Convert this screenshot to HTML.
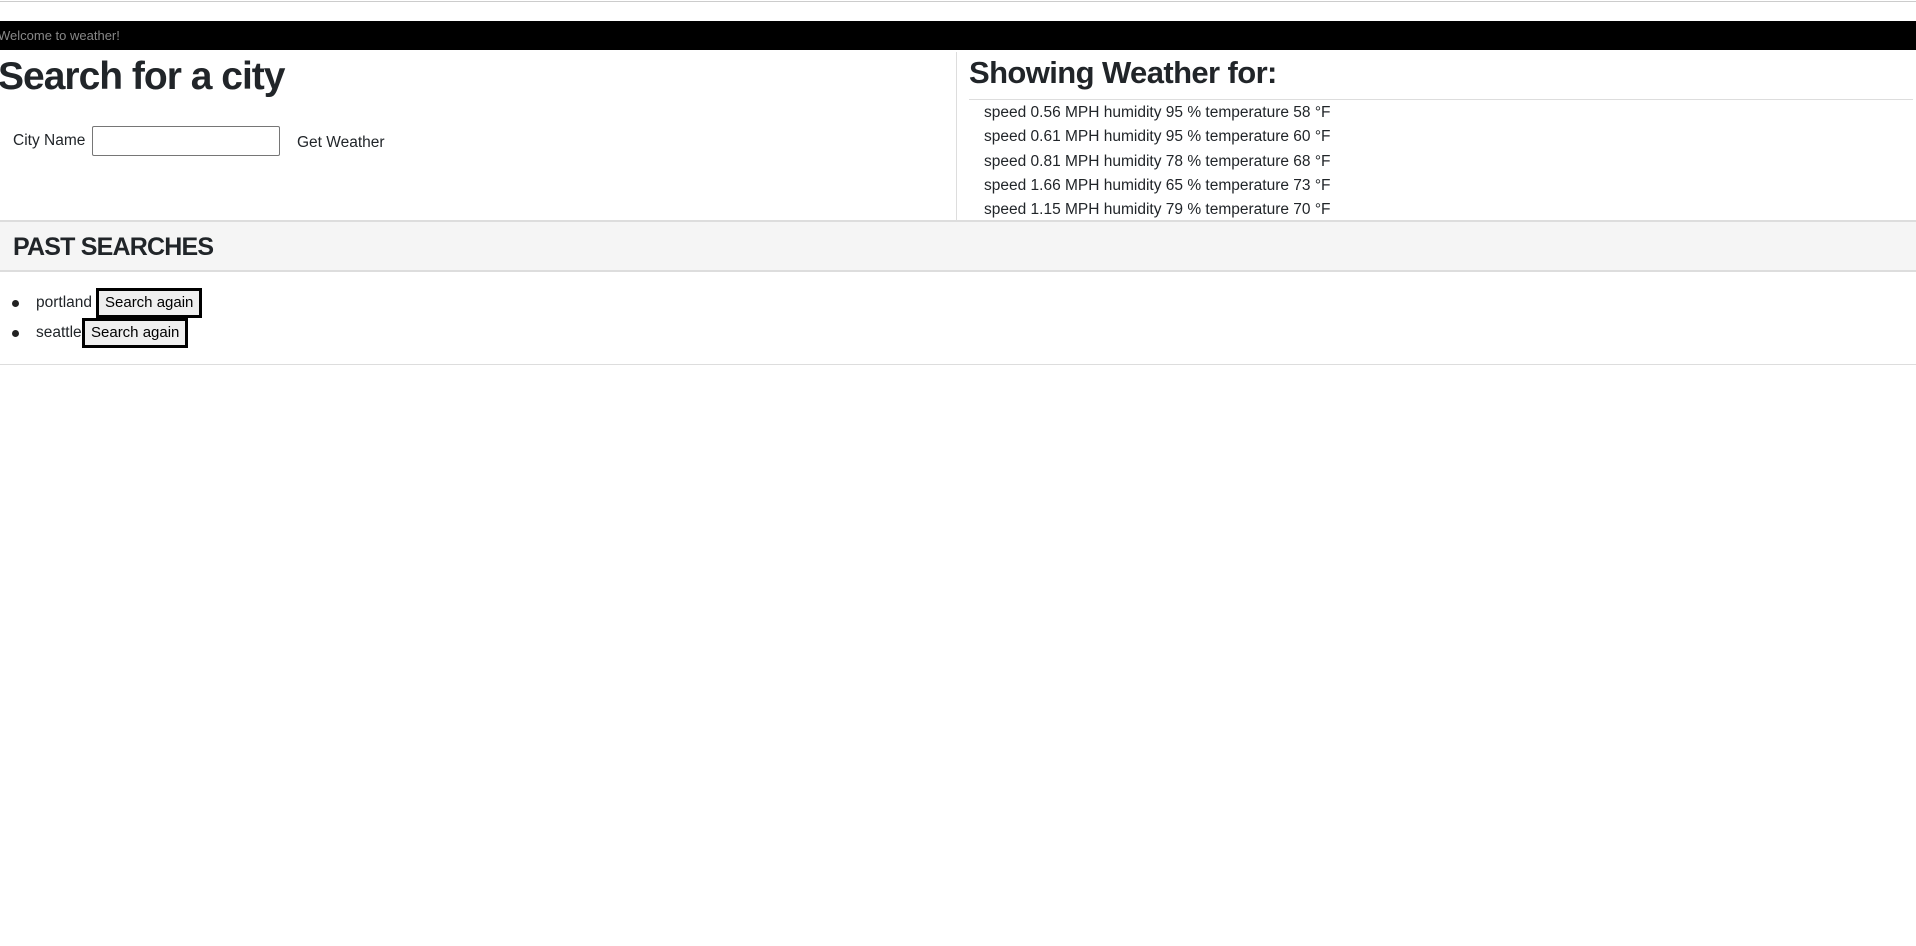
<!DOCTYPE html>
<html><head><meta charset="utf-8"><style>
*{box-sizing:border-box;margin:0;padding:0}
body{width:1916px;height:946px;background:#fff;font-family:"Liberation Sans",sans-serif;color:#212529;position:relative;overflow:hidden;font-size:16px}
.a{position:absolute;white-space:nowrap}
.btn{position:absolute;border:3px solid #000;background:#efefef;color:#000;font-size:15px;height:30px;line-height:24px;padding:0 6px}
</style></head><body>
<div class="a" style="left:0;top:1px;width:1916px;height:1px;background:#ccc"></div>
<div class="a" style="left:0;top:21px;width:1916px;height:29px;background:#000"></div>
<div class="a" style="left:-2px;top:28px;font-size:13px;color:#888">Welcome to weather!</div>
<div class="a" style="left:-2px;top:55px;font-size:39px;font-weight:bold;letter-spacing:-1px">Search for a city</div>
<div class="a" style="left:13px;top:132px;font-size:15.5px">City Name</div>
<div class="a" style="left:92px;top:126px;width:188px;height:30px;border:1px solid #767676;border-radius:2px"></div>
<div class="a" style="left:297px;top:134px;font-size:15.5px">Get Weather</div>
<div class="a" style="left:956px;top:52px;width:1px;height:168px;background:#ddd"></div>
<div class="a" style="left:969px;top:55px;font-size:31px;font-weight:bold;letter-spacing:-0.6px">Showing Weather for:</div>
<div class="a" style="left:969px;top:99px;width:944px;height:1px;background:#ddd"></div>
<div class="a" style="left:984px;top:101px;line-height:24.3px;font-size:15.5px">speed 0.56 MPH humidity 95 % temperature 58 °F<br>speed 0.61 MPH humidity 95 % temperature 60 °F<br>speed 0.81 MPH humidity 78 % temperature 68 °F<br>speed 1.66 MPH humidity 65 % temperature 73 °F<br>speed 1.15 MPH humidity 79 % temperature 70 °F</div>
<div class="a" style="left:0;top:220px;width:1916px;height:52px;background:#f5f5f5;border-top:2px solid #ddd;border-bottom:2px solid #ddd"></div>
<div class="a" style="left:13px;top:233px;font-size:25px;font-weight:bold;letter-spacing:-0.8px">PAST SEARCHES</div>
<div class="a" style="left:12px;top:300px;width:7px;height:7px;border-radius:50%;background:#222"></div>
<div class="a" style="left:36px;top:294px;font-size:15.5px">portland</div>
<div class="btn" style="left:96px;top:288px">Search again</div>
<div class="a" style="left:12px;top:330px;width:7px;height:7px;border-radius:50%;background:#222"></div>
<div class="a" style="left:36px;top:324px;font-size:15.5px">seattle</div>
<div class="btn" style="left:82px;top:318px">Search again</div>
<div class="a" style="left:0;top:364px;width:1916px;height:1px;background:#ddd"></div>
</body></html>
